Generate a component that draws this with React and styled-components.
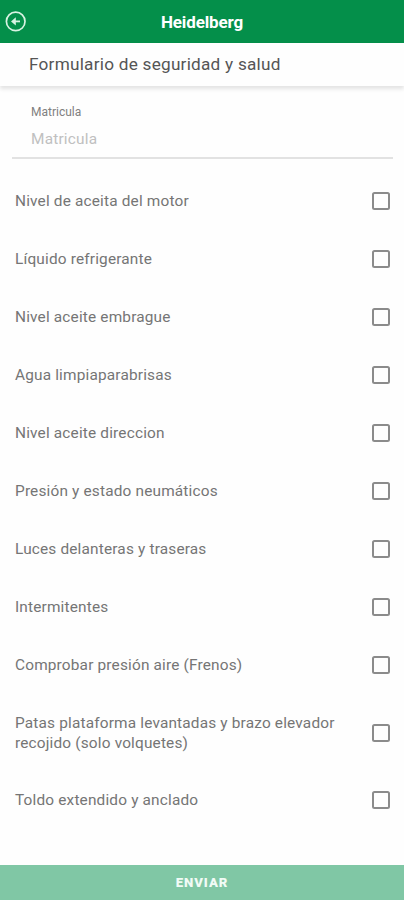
import React from "react";
import styled, { createGlobalStyle } from "styled-components";

const GlobalStyle = createGlobalStyle`
  * { box-sizing: border-box; }
  body { margin: 0; background: #fefefe; font-family: Roboto, sans-serif; }
`;

const Screen = styled.main`
  display: flex;
  flex-direction: column;
  height: 900px;
  background: #fefefe;
`;

const AppBar = styled.header`
  display: grid;
  grid-template-columns: 32px 1fr 32px;
  align-items: center;
  height: 42.5px;
  flex: none;
  background: #048f4a;
  color: #fff;
`;

const BackButton = styled.button`
  display: flex;
  padding: 0 0 0 5px;
  border: 0;
  background: none;
  color: #d9f3e3;
`;

const AppTitle = styled.h1`
  margin: 0;
  padding-top: 1px;
  text-align: center;
  font-size: 17px;
  line-height: 20px;
  font-weight: 700;
  letter-spacing: -0.14px;
`;

const FormTitle = styled.h2`
  flex: none;
  height: 43.5px;
  margin: 0;
  padding-left: 29px;
  font-size: 17.2px;
  line-height: 43px;
  font-weight: 400;
  letter-spacing: 0.24px;
  color: #555;
  box-shadow: 0 3px 4px rgba(0, 0, 0, 0.11);
`;

const Field = styled.label`
  display: flex;
  flex-direction: column;
  flex: none;
  height: 73px;
  margin: 0 11px 0 12px;
  padding: 18px 19px 0;
  border-bottom: 2px solid #e2e2e2;
`;

const FieldLabel = styled.span`
  font-size: 12px;
  line-height: 16px;
  letter-spacing: 0;
  color: #808080;
`;

const FieldInput = styled.input`
  width: 100%;
  height: 20px;
  margin-top: 9px;
  padding: 0;
  border: 0;
  outline: 0;
  background: none;
  font: 400 15.4px/20px Roboto, sans-serif;
  letter-spacing: 0.2px;
  &::placeholder { color: #c0c0c0; opacity: 1; }
`;

const Checklist = styled.ul`
  flex: 1;
  margin: 0;
  padding: 12.5px 14px 0 15px;
  list-style: none;
`;

const Row = styled.li`
  display: flex;
  align-items: center;
  justify-content: space-between;
  height: ${(p) => (p.$tall ? 77 : 58.1)}px;
`;

const RowLabel = styled.span`
  width: 330px;
  padding-top: 1.6px;
  font-size: 15.4px;
  line-height: 19.5px;
  letter-spacing: 0.17px;
  color: #757575;
`;

const Checkbox = styled.span`
  flex: none;
  width: 18px;
  height: 18px;
  border: 2px solid #8b8b8b;
  border-radius: 2.5px;
`;

const Submit = styled.button`
  flex: none;
  height: 35px;
  padding: 0;
  border: 0;
  background: #80c7a5;
  color: #f1fbf6;
  font: 900 13.2px/35px Roboto, sans-serif;
  letter-spacing: 0.95px;
`;

const checks = [
  "Nivel de aceita del motor",
  "Líquido refrigerante",
  "Nivel aceite embrague",
  "Agua limpiaparabrisas",
  "Nivel aceite direccion",
  "Presión y estado neumáticos",
  "Luces delanteras y traseras",
  "Intermitentes",
  "Comprobar presión aire (Frenos)",
  "Patas plataforma levantadas y brazo elevador recojido (solo volquetes)",
  "Toldo extendido y anclado",
];

function BackIcon() {
  return (
    <svg width="22" height="22" viewBox="0 0 22 22" fill="none" stroke="currentColor">
      <circle cx="10.7" cy="11.4" r="9.3" strokeWidth="1.7" />
      <path d="M15 11.4H9" strokeWidth="1.8" />
      <path d="M10.8 7.2V15.6L6 11.4Z" fill="currentColor" stroke="none" />
    </svg>
  );
}

export default function App() {
  return (
    <>
      <GlobalStyle />
      <Screen>
        <AppBar>
          <BackButton aria-label="Volver"><BackIcon /></BackButton>
          <AppTitle>Heidelberg</AppTitle>
        </AppBar>
        <FormTitle>Formulario de seguridad y salud</FormTitle>
        <Field>
          <FieldLabel>Matricula</FieldLabel>
          <FieldInput placeholder="Matricula" />
        </Field>
        <Checklist>
          {checks.map((text) => (
            <Row key={text} $tall={text.length > 45}>
              <RowLabel>{text}</RowLabel>
              <Checkbox role="checkbox" aria-checked="false" aria-label={text} />
            </Row>
          ))}
        </Checklist>
        <Submit>ENVIAR</Submit>
      </Screen>
    </>
  );
}
